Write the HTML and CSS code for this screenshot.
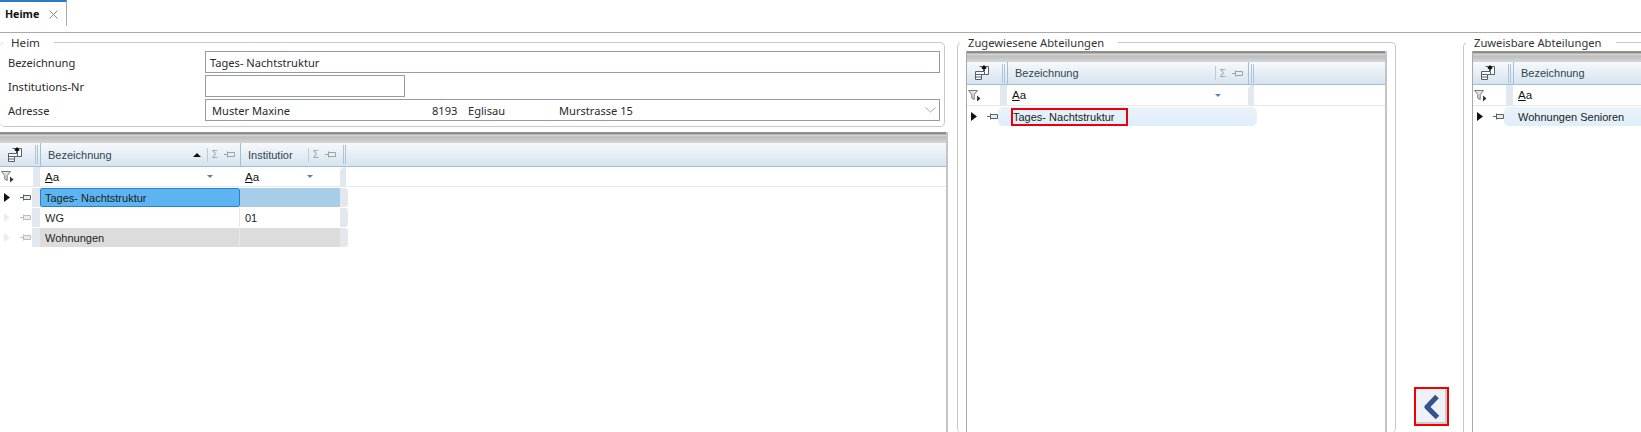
FILE: index.html
```html
<!DOCTYPE html>
<html lang="de">
<head>
<meta charset="utf-8">
<title>Heime</title>
<link rel="stylesheet" href="styles.css">
</head>
<body>
<svg class="defs" width="0" height="0" aria-hidden="true">
  <symbol id="i-chooser" viewBox="0 0 16 16">
    <path d="M5.500 1.500h9v8h-4" fill="#fff" stroke="#55606a"/>
    <path d="M1.500 6.500h9v3h-3v5h-6z" fill="#fff" stroke="#55606a"/>
    <path d="M1.500 9.500h6M1.500 12h6" stroke="#55606a"/>
    <path d="M10 6V1.500M7.800 3.500L10 1.200l2.200 2.300" fill="none" stroke="#111" stroke-width="1.500"/>
  </symbol>
  <symbol id="i-filter" viewBox="0 0 13 13">
    <path d="M.5 1.500h9L6.200 5.500v5l-2.400-1.400V5.500z" fill="#e4e4e4" stroke="#7a7a7a"/>
    <path d="M9 6.500l3.500 3L9 12.500z" fill="#333"/>
  </symbol>
  <symbol id="i-pin" viewBox="0 0 11 7">
    <path d="M0 3.500h3" stroke="currentColor"/>
    <path d="M3.500 .5v6M3.500 1.500h7v4h-7z" fill="#e8eeee" stroke="currentColor"/>
  </symbol>
  <symbol id="i-arrow" viewBox="0 0 6 9"><path d="M0 0l6 4.500L0 9z" fill="currentColor"/></symbol>
</svg>

<nav class="tabbar">
  <div class="tab"><b>Heime</b>
    <svg class="tab-x" width="9" height="9" viewBox="0 0 9 9"><path d="M.5.500l8 8M8.500.500l-8 8" fill="none" stroke="#8a8a8a"/></svg>
  </div>
</nav>

<main class="layout">
  <section class="col-left">
    <fieldset class="group group-form">
      <legend>Heim</legend>
      <div class="form-row"><label>Bezeichnung</label><div class="input wide">Tages- Nachtstruktur</div></div>
      <div class="form-row"><label>Institutions-Nr</label><div class="input short"></div></div>
      <div class="form-row"><label>Adresse</label>
        <div class="input wide combo">
          <span class="a-name">Muster Maxine</span><span class="a-zip">8193</span><span class="a-city">Eglisau</span><span class="a-street">Murstrasse 15</span>
          <svg class="chev" width="11" height="6" viewBox="0 0 11 6"><path d="M.5.500l5 4.500 5-4.500" fill="none" stroke="#a5a5ad"/></svg>
        </div>
      </div>
    </fieldset>

    <div class="grid grid-main">
      <div class="grid-bar"></div>
      <div class="grid-head">
        <div class="corner"><svg class="chooser"><use href="#i-chooser"/></svg><i class="split"></i></div>
        <div class="hcol c-name"><span class="htext">Bezeichnung</span><i class="sort"></i><i class="hsep"></i><span class="sigma">Σ</span><svg class="hpin"><use href="#i-pin"/></svg></div>
        <div class="hcol c-inst"><span class="htext">Institutior</span><i class="hsep"></i><span class="sigma">Σ</span><svg class="hpin"><use href="#i-pin"/></svg></div>
        <i class="split end"></i>
      </div>
      <div class="filter">
        <div class="findi"><svg class="ficon"><use href="#i-filter"/></svg><i class="strip"></i></div>
        <div class="fcell c-name"><span class="aa"><u>A</u>a</span><i class="drop"></i></div>
        <div class="fcell c-inst"><span class="aa"><u>A</u>a</span><i class="drop"></i></div>
        <i class="strip last"></i>
      </div>
      <div class="row">
        <div class="indi gutter active"><svg class="arrow"><use href="#i-arrow"/></svg><svg class="pin"><use href="#i-pin"/></svg></div>
        <div class="cell c-name selected">Tages- Nachtstruktur</div><div class="cell c-inst selected-soft"></div><i class="rend"></i>
      </div>
      <div class="row">
        <div class="indi gutter dim"><svg class="arrow"><use href="#i-arrow"/></svg><svg class="pin"><use href="#i-pin"/></svg></div>
        <div class="cell c-name split-r">WG</div><div class="cell c-inst">01</div><i class="rend"></i>
      </div>
      <div class="row">
        <div class="indi gutter dim"><svg class="arrow"><use href="#i-arrow"/></svg><svg class="pin"><use href="#i-pin"/></svg></div>
        <div class="cell c-name muted split-r">Wohnungen</div><div class="cell c-inst muted"></div><i class="rend"></i>
      </div>
    </div>
  </section>

  <fieldset class="group group-side mid">
    <legend>Zugewiesene Abteilungen</legend>
    <div class="grid">
      <div class="grid-bar"></div>
      <div class="grid-head">
        <div class="corner"><svg class="chooser"><use href="#i-chooser"/></svg><i class="split"></i></div>
        <div class="hcol c-side"><span class="htext">Bezeichnung</span><i class="hsep"></i><span class="sigma">Σ</span><svg class="hpin"><use href="#i-pin"/></svg></div>
        <i class="split end"></i>
      </div>
      <div class="filter">
        <div class="findi"><svg class="ficon"><use href="#i-filter"/></svg><i class="strip"></i></div>
        <div class="fcell c-side"><span class="aa"><u>A</u>a</span><i class="drop"></i></div>
        <i class="strip last"></i>
      </div>
      <div class="row">
        <div class="indi"><svg class="arrow"><use href="#i-arrow"/></svg><svg class="pin"><use href="#i-pin"/></svg></div>
        <div class="cell soft"><span class="marked">Tages- Nachtstruktur</span></div>
      </div>
    </div>
  </fieldset>

  <div class="actions">
    <button class="move" type="button" aria-label="Zuweisen">
      <svg class="move-icon" width="18" height="26" viewBox="0 0 18 26"><path d="M14 2.500L4 13l10.500 10.500" fill="none" stroke="#32538d" stroke-width="5" stroke-linejoin="round"/></svg>
    </button>
  </div>

  <fieldset class="group group-side last">
    <legend>Zuweisbare Abteilungen</legend>
    <div class="grid">
      <div class="grid-bar"></div>
      <div class="grid-head">
        <div class="corner"><svg class="chooser"><use href="#i-chooser"/></svg><i class="split"></i></div>
        <div class="hcol c-side"><span class="htext">Bezeichnung</span></div>
      </div>
      <div class="filter">
        <div class="findi"><svg class="ficon"><use href="#i-filter"/></svg><i class="strip"></i></div>
        <div class="fcell c-side"><span class="aa"><u>A</u>a</span></div>
      </div>
      <div class="row">
        <div class="indi"><svg class="arrow"><use href="#i-arrow"/></svg><svg class="pin"><use href="#i-pin"/></svg></div>
        <div class="cell soft">Wohnungen Senioren</div>
      </div>
    </div>
  </fieldset>
</main>
</body>
</html>
```
FILE: styles.css
```css
* { box-sizing: border-box; }
html, body { margin: 0; height: 432px; overflow: hidden; background: #fff; }
body { font-family: "Noto Sans", "Open Sans", sans-serif; font-size: 11.1px; color: #2a2a2a; }
.defs { position: absolute; }

/* tab bar */
.tabbar { height: 33px; border-bottom: 1px solid #a9a9a9; }
.tab { width: 67px; height: 26px; border-top: 2px solid #2b79c9; border-right: 1px solid #a9a9a9; padding-left: 5px; display: flex; align-items: center; gap: 10px; font-size: 10.6px; color: #111; }
.tab-x { flex: none; }

/* page columns */
.layout { display: flex; height: 399px; }
.col-left { width: 948px; flex: none; display: flex; flex-direction: column; }

/* group boxes */
.group { margin: 0; padding: 0; min-width: 0; border: 1px solid #c6c6cb; border-radius: 5px; }
.group legend { padding: 0 14px 0 8px; margin-left: -6px; line-height: 17px; font-size: 11.2px; color: #333; }
.group-form { width: 945px; height: 93px; margin-top: 1px; border-left: 0; flex: none; }
.group .group-form-legend, .group-form legend { margin-left: 3px; margin-bottom: -1px; font-size: 11.6px; }
.form-row { height: 24px; display: flex; align-items: center; padding-left: 8px; }
.form-row label { width: 197px; flex: none; }
.input { height: 22px; border: 1px solid #9a9aa6; padding-left: 4px; display: flex; align-items: center; }
.input.wide { width: 735px; }
.input.short { width: 200px; }
.combo { padding-left: 0; position: relative; }
.a-name { margin-left: 6px; width: 220px; }
.a-zip { width: 36px; }
.a-city { width: 91px; }
.chev { position: absolute; right: 3px; top: 7px; }

/* side groups */
.group-side { border-bottom: 0; height: 399px; padding: 0 8px 0 8px; margin-top: 1px; }
.mid { width: 439px; margin-left: 9px; flex: none; }
.last { width: 178px; flex: none; padding-right: 0; border-right: 0; border-radius: 5px 0 0 0; }
.actions { width: 67px; flex: none; display: flex; align-items: flex-end; padding: 0 0 6px 18px; }
.move { width: 35px; height: 39px; padding: 0; border: 2px solid #f00000; background: #eef1f7; box-shadow: inset -2px -2px 0 #c9ccd4; display: flex; align-items: center; justify-content: center; }
.move-icon { filter: blur(.6px); }

/* data grids */
.grid { font-family: "Liberation Sans", Arial, sans-serif; font-size: 11px; color: #1c1c1c; border-right: 2px solid #c4c4c8; flex: 1; height: 100%; display: flex; flex-direction: column; }
.group-side > .grid { height: 392px; border-left: 1px solid #a8a8ae; }
.last > .grid { border-right: 0; }
.grid-main { margin-top: 5px; width: 948px; flex: 1; }
.grid-bar { height: 11px; flex: none; background: linear-gradient(#8e8e8e 0, #8e8e8e 2px, #dcdcdc 3px, #bdbdbd 5px, #d6d6d6 11px); }
.grid-head { height: 23px; flex: none; display: flex; align-items: stretch; background: linear-gradient(#f6f9fc, #d7e3ee); border-bottom: 1px solid #9ec0dc; color: #2e4750; }
.grid-main .grid-head { height: 24px; }
.corner { width: 41px; flex: none; display: flex; align-items: center; padding-left: 7px; border-right: 1px solid #9ec0dc; }
.chooser { width: 16px; height: 16px; }
.split { width: 3px; height: 19px; border-left: 1px solid #b2c2d0; border-right: 1px solid #b2c2d0; margin-left: auto; margin-right: 2px; align-self: center; flex: none; }
.split.end { margin: 0 0 0 2px; }
.hcol { display: flex; align-items: center; padding-left: 7px; flex: none; border-right: 1px solid #9ec0dc; }
.htext { flex: none; }
.c-name { width: 200px; }
.c-inst { width: 100px; }
.c-side { width: 241px; }
.grid-main .hcol.c-inst { border-right: 0; }
.sort { margin-left: auto; margin-right: 6px; width: 0; height: 0; border: 4px solid transparent; border-top: 0; border-bottom: 4px solid #111; }
.hsep { width: 1px; height: 14px; background: #bccbd8; margin-left: auto; }
.sort + .hsep { margin-left: 0; }
.sigma { color: #98a2a8; font-size: 10px; margin-left: 4px; }
.hpin { width: 11px; height: 7px; color: #98a2a8; margin: 0 5px 0 6px; }

.filter { height: 21px; flex: none; display: flex; border-bottom: 1px solid #e6e9ec; }
.grid-main .filter { height: 20px; }
.findi { width: 40px; flex: none; display: flex; align-items: center; padding-left: 1px; }
.ficon { width: 13px; height: 13px; }
.strip { width: 7px; height: 100%; background: #e3e7ee; margin-left: auto; flex: none; }
.strip.last { margin-left: 0; width: 6px; }
.fcell { display: flex; align-items: center; padding-left: 5px; flex: none; background: #fff; }
.aa { font-size: 11.5px; color: #111; }
.drop { margin-left: auto; margin-right: 27px; width: 0; height: 0; border: 3px solid transparent; border-bottom: 0; border-top: 3px solid #5b82b5; }

.row { height: 19px; flex: none; display: flex; align-items: stretch; margin-top: 1px; }
.indi { width: 40px; flex: none; display: flex; align-items: center; padding-left: 4px; color: #111; }
.indi .arrow { width: 6px; height: 9px; }
.indi .pin { width: 11px; height: 7px; margin-left: 10px; color: #55665f; }
.indi.dim .arrow { color: #ececec; }
.indi.dim .pin { color: #b9bfbd; }
.gutter { background: linear-gradient(to right, transparent 32px, #e3e8ef 32px); }
.gutter.active { box-shadow: inset -8px 0 0 #e3e8ef; }
.cell { display: flex; align-items: center; padding-left: 5px; flex: none; }
.split-r { border-right: 1px solid #e3e8ef; }
.selected { background: #5cb5f1; border: 1px solid #2a7fd6; border-radius: 2px; padding-left: 4px; }
.selected-soft { background: #a7cde8; }
.muted { background: #dcdcdc; }
.rend { width: 8px; flex: none; background: #e3e8ef; border-radius: 0 3px 3px 0; }
.soft { background: linear-gradient(#e9f3fa, #dfeef8); border-radius: 5px; margin-left: -9px; padding-left: 14px; width: 259px; }
.mid .soft { padding-left: 13px; }
.last .soft { width: auto; flex: 1; border-radius: 5px 0 0 5px; }
.marked { border: 2px solid #e8000f; height: 18px; width: 117px; align-self: flex-end; display: flex; align-items: center; }
```
